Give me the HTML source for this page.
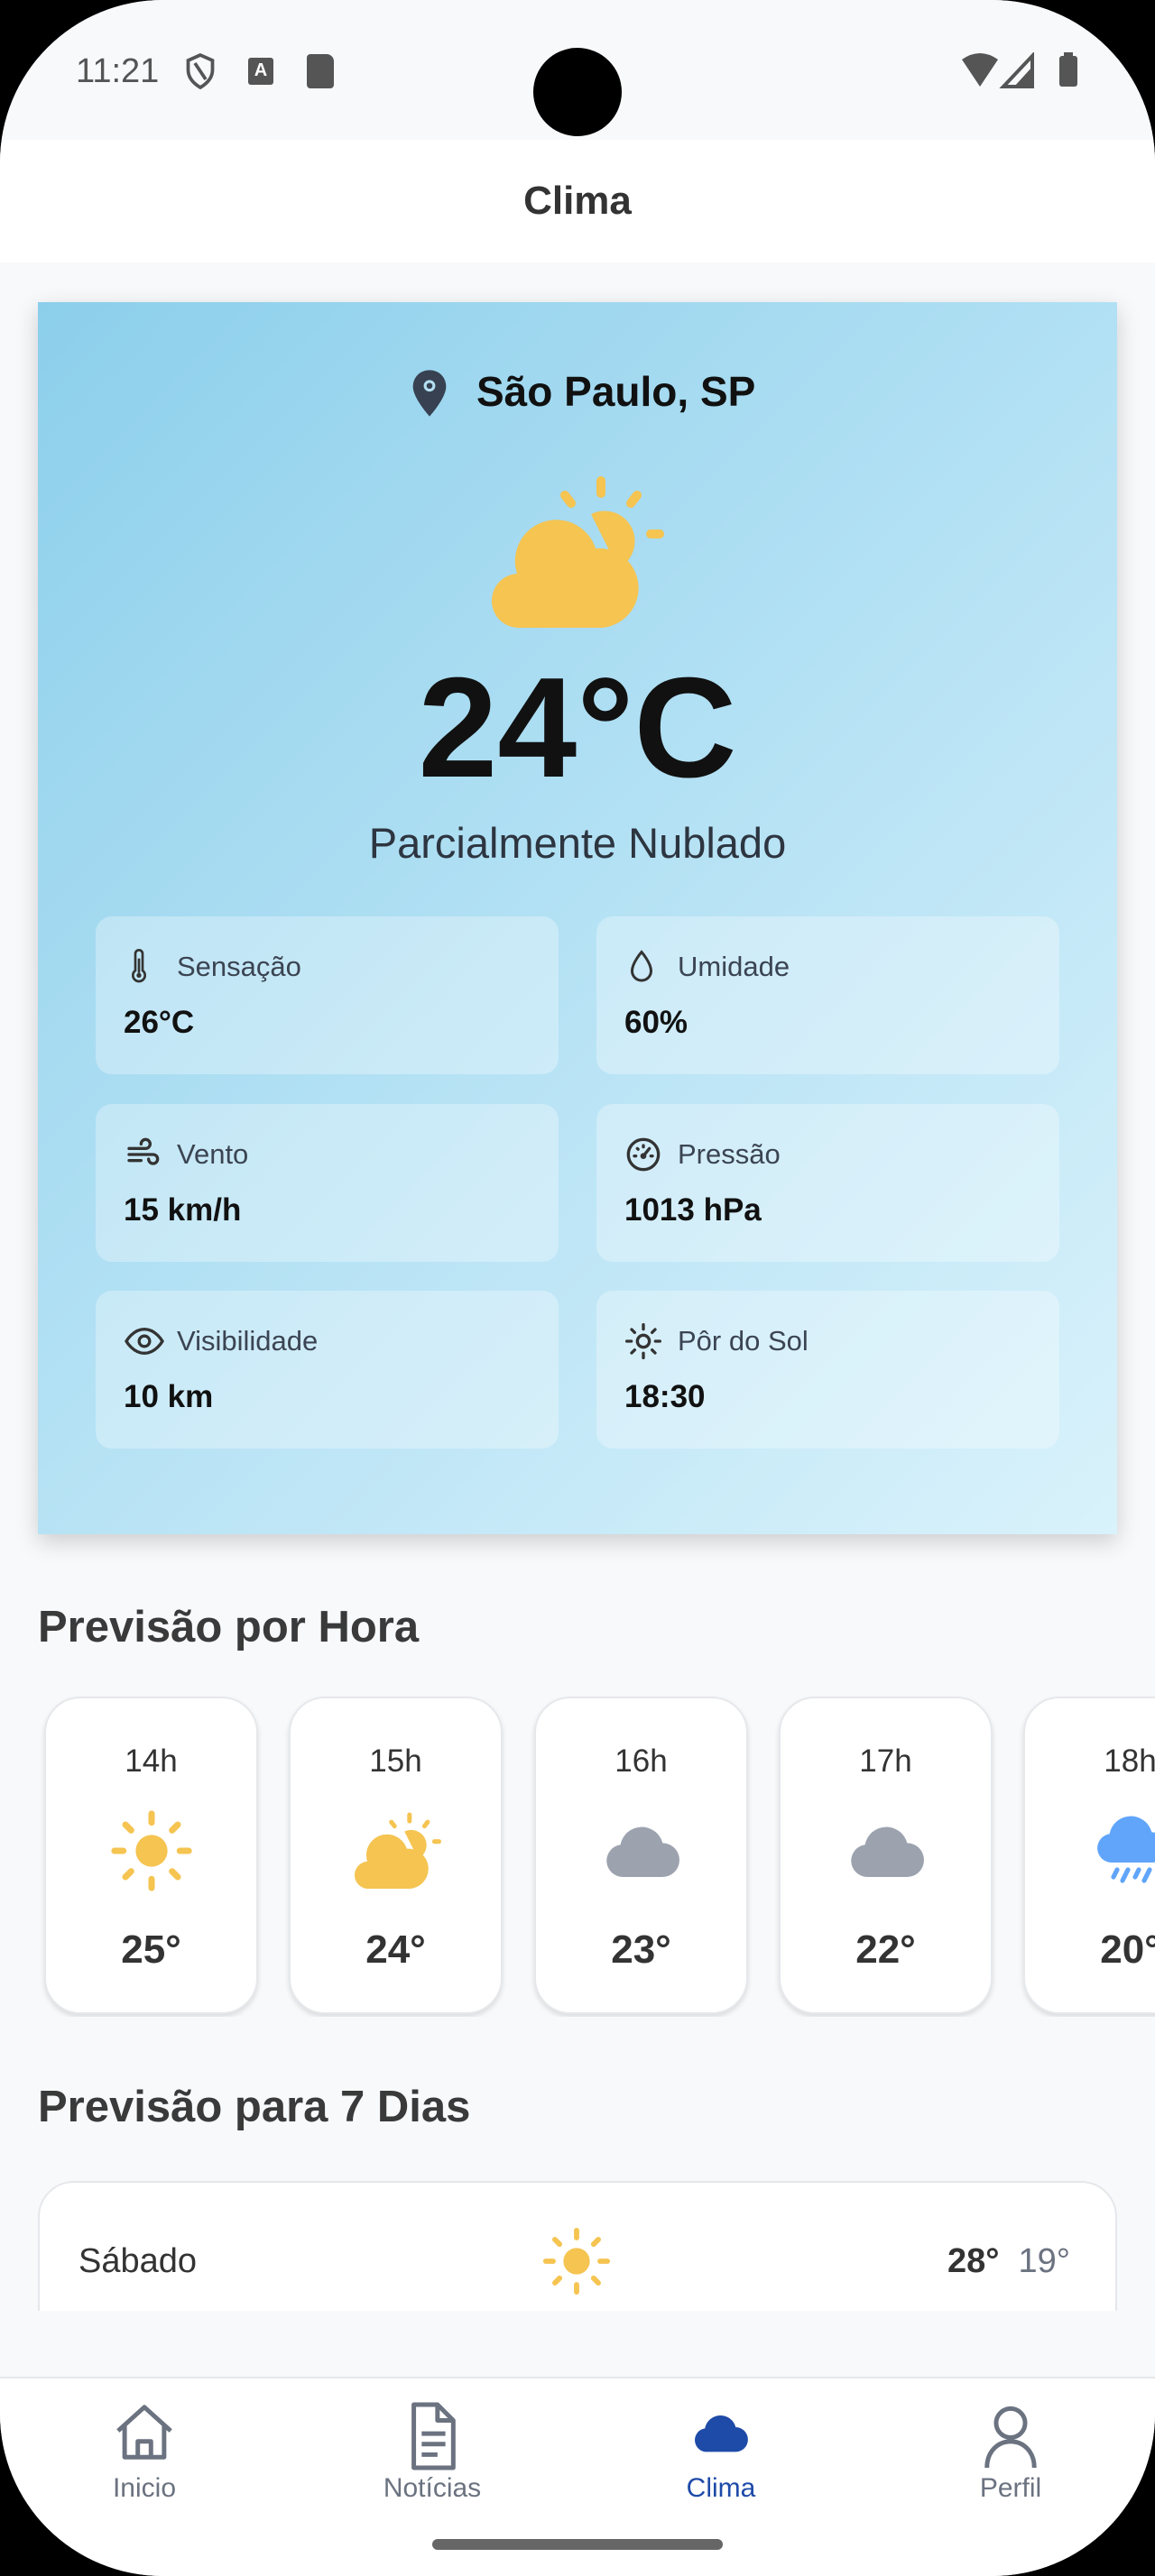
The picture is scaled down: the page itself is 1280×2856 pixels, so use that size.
<!DOCTYPE html>
<html><head><meta charset="utf-8"><style>
*{margin:0;padding:0;box-sizing:border-box}
html,body{width:1280px;height:2856px;background:#000;overflow:hidden}
body{font-family:"Liberation Sans",sans-serif}
#dev{position:absolute;left:0;top:0;width:1280px;height:2856px;background:#f8f9fb;border-radius:180px;overflow:hidden}
.abs{position:absolute}
.status{left:0;top:0;width:1280px;height:155px;background:#f8f9fb}
.appbar{left:0;top:155px;width:1280px;height:136px;background:#fff;text-align:center;font-size:44px;font-weight:bold;color:#333;line-height:136px}
.card{left:42px;top:335px;width:1196px;height:1366px;background:linear-gradient(135deg,#8ccfeb 0%,#b8e3f5 55%,#d9f2fb 100%);box-shadow:0 8px 24px rgba(0,0,0,.18)}
.stat{position:absolute;width:513px;height:175px;background:rgba(255,255,255,.3);border-radius:18px}
.stat .lb{position:absolute;left:90px;top:38px;font-size:31px;color:#3b4452}
.stat .vl{position:absolute;left:31px;top:98px;font-size:35px;font-weight:bold;color:#111}
.stat svg{position:absolute;left:32px;top:36px}
.h2{font-size:49px;font-weight:bold;color:#3a3a3a;left:42px}
.hc{position:absolute;top:1881px;width:237px;height:352px;background:#fff;border-radius:40px;border:2px solid #e6e8ec;box-shadow:0 3px 6px rgba(0,0,0,.12);text-align:center}
.hc .t{position:absolute;left:0;right:0;top:50px;font-size:35px;color:#333}
.hc .tp{position:absolute;left:0;right:0;top:254px;font-size:44px;font-weight:bold;color:#333}
.hc svg{position:absolute;left:70px;top:122px}
.nav{left:0;top:2635px;width:1280px;height:221px;background:#fff;border-top:2px solid #e5e7eb}
.ni{position:absolute;top:0;width:240px;text-align:center;font-size:30px;color:#6b7280}
.ni svg{position:absolute;left:85px;top:26px}
.ni span{position:absolute;left:0;right:0;top:105px}
</style></head><body>
<div id="dev">
<div class="abs status">
 <div class="abs" style="left:84px;top:58px;font-size:38px;color:#555">11:21</div>
 <svg class="abs" style="left:204px;top:58px" width="36" height="42" viewBox="0 0 24 28"><path d="M12 2 3 6v7c0 6 4 10 9 13 5-3 9-7 9-13V6z M8 8l8 12" fill="none" stroke="#555" stroke-width="2.5"/></svg>
 <div class="abs" style="left:275px;top:64px;width:28px;height:30px;background:#555;border-radius:3px;color:#fff;font-size:20px;font-weight:bold;text-align:center;line-height:28px">A</div>
 <div class="abs" style="left:340px;top:60px;width:30px;height:38px;background:#555;border-radius:4px 8px 4px 4px"></div>
 <div class="abs" style="left:591px;top:53px;width:98px;height:98px;background:#000;border-radius:50%"></div>
 <svg class="abs" style="left:1064px;top:58px" width="132" height="40" viewBox="0 0 132 40"><path d="M2 8Q22-6 42 8L22 38z" fill="#555"/><path d="M80 4v34H48z" fill="none" stroke="#555" stroke-width="4"/><path d="M80 16v22H60z" fill="#555"/><rect x="110" y="4" width="20" height="34" rx="3" fill="#555"/><rect x="115" y="0" width="10" height="6" fill="#555"/></svg>
</div>
<div class="abs appbar">Clima</div>

<div class="abs card">
 <svg class="abs" style="left:412px;top:73px" width="44" height="56" viewBox="0 0 24 30"><path d="M12 1C6 1 2 5.5 2 11c0 7 10 18 10 18s10-11 10-18C22 5.5 18 1 12 1z" fill="#374151"/><circle cx="12" cy="10.5" r="3.5" fill="#b3dff2"/><circle cx="12" cy="10.5" r="1.8" fill="#374151"/></svg>
 <div class="abs" style="left:486px;top:72px;font-size:46px;font-weight:bold;color:#111">São Paulo, SP</div>
 <svg class="abs" style="left:501px;top:190px" width="195" height="175" viewBox="0 0 195 175"><g stroke="#f5c451" stroke-width="10" stroke-linecap="round"><line x1="123" y1="8" x2="123" y2="22"/><line x1="83" y1="24" x2="90" y2="33"/><line x1="163" y1="24" x2="156" y2="33"/><line x1="178" y1="67" x2="188" y2="67"/></g><path d="M112 45a30 30 0 0 1 30 60z" fill="#f5c451"/><path d="M34 171a30 30 0 0 1-4-60 45 45 0 0 1 87-28 34 34 0 0 1 7 88z" fill="#f5c451"/></svg>
 <div class="abs" style="left:0;width:1196px;text-align:center;top:372px;font-size:158px;font-weight:bold;color:#111;line-height:200px">24°C</div>
 <div class="abs" style="left:0;width:1196px;text-align:center;top:572px;font-size:47px;color:#2d3540">Parcialmente Nublado</div>

 <div class="stat" style="left:64px;top:681px"><svg width="32" height="40" viewBox="0 0 24 30"><path d="M9 4a3 3 0 0 1 6 0v14a5 5 0 1 1-6 0z" fill="none" stroke="#333" stroke-width="2"/><circle cx="12" cy="22" r="2" fill="#333"/><line x1="12" y1="8" x2="12" y2="20" stroke="#333" stroke-width="2"/></svg><div class="lb">Sensação</div><div class="vl">26°C</div></div>
 <div class="stat" style="left:619px;top:681px"><svg width="36" height="40" viewBox="0 0 24 26"><path d="M12 2C12 2 5 10 5 16a7 7 0 0 0 14 0c0-6-7-14-7-14z" fill="none" stroke="#333" stroke-width="2"/></svg><div class="lb">Umidade</div><div class="vl">60%</div></div>
 <div class="stat" style="left:64px;top:889px"><svg width="40" height="40" viewBox="0 0 24 24"><path d="M3 8h11a3 3 0 1 0-3-3M3 12h16a3 3 0 1 1-3 3M3 16h8" fill="none" stroke="#333" stroke-width="2" stroke-linecap="round"/></svg><div class="lb">Vento</div><div class="vl">15 km/h</div></div>
 <div class="stat" style="left:619px;top:889px"><svg width="40" height="40" viewBox="0 0 24 24"><circle cx="12" cy="12" r="10" fill="none" stroke="#333" stroke-width="2"/><path d="M12 13l4-5M6 13h1M17 13h1M8 8l.5.5M12 6v1" stroke="#333" stroke-width="2" stroke-linecap="round"/><circle cx="12" cy="13" r="2" fill="#333"/></svg><div class="lb">Pressão</div><div class="vl">1013 hPa</div></div>
 <div class="stat" style="left:64px;top:1096px"><svg width="44" height="40" viewBox="0 0 26 24"><path d="M1 12s4.5-8 12-8 12 8 12 8-4.5 8-12 8S1 12 1 12z" fill="none" stroke="#333" stroke-width="2"/><circle cx="13" cy="12" r="3.5" fill="none" stroke="#333" stroke-width="2"/></svg><div class="lb">Visibilidade</div><div class="vl">10 km</div></div>
 <div class="stat" style="left:619px;top:1096px"><svg width="40" height="40" viewBox="0 0 24 24"><circle cx="12" cy="12" r="4" fill="none" stroke="#333" stroke-width="2"/><path d="M12 1v3M12 20v3M1 12h3M20 12h3M4.2 4.2l2 2M17.8 17.8l2 2M4.2 19.8l2-2M17.8 6.2l2-2" stroke="#333" stroke-width="2" stroke-linecap="round"/></svg><div class="lb">Pôr do Sol</div><div class="vl">18:30</div></div>
</div>

<div class="abs h2" style="top:1776px">Previsão por Hora</div>
<div class="abs" style="left:0;top:1860px;width:1280px;height:376px;overflow:hidden">
<div style="position:absolute;top:-1860px;left:0;width:1280px;height:2300px">
<div class="hc" style="left:49px"><div class="t">14h</div><svg width="94" height="94" viewBox="0 0 24 24"><circle cx="12" cy="12" r="4.5" fill="#f5c451"/><g stroke="#f5c451" stroke-width="1.8" stroke-linecap="round"><path d="M12 1.5v2.5M12 20v2.5M1.5 12h2.5M20 12h2.5M4.6 4.6l1.6 1.6M17.8 17.8l1.6 1.6M4.6 19.4l1.6-1.6M17.8 6.2l1.6-1.6"/></g></svg><div class="tp">25°</div></div>
<div class="hc" style="left:320px"><div class="t">15h</div><svg width="98" height="94" viewBox="0 0 195 175"><g stroke="#f5c451" stroke-width="10" stroke-linecap="round"><line x1="123" y1="8" x2="123" y2="22"/><line x1="83" y1="24" x2="90" y2="33"/><line x1="163" y1="24" x2="156" y2="33"/><line x1="178" y1="67" x2="188" y2="67"/></g><path d="M112 45a30 30 0 0 1 30 60z" fill="#f5c451"/><path d="M34 171a30 30 0 0 1-4-60 45 45 0 0 1 87-28 34 34 0 0 1 7 88z" fill="#f5c451"/></svg><div class="tp">24°</div></div>
<div class="hc" style="left:592px"><div class="t">16h</div><svg width="96" height="96" viewBox="0 0 24 24"><path d="M6.5 19a4.5 4.5 0 0 1-.6-8.95A6 6 0 0 1 17.6 9.6 4.7 4.7 0 0 1 17.5 19z" fill="#9ca3af"/></svg><div class="tp">23°</div></div>
<div class="hc" style="left:863px"><div class="t">17h</div><svg width="96" height="96" viewBox="0 0 24 24"><path d="M6.5 19a4.5 4.5 0 0 1-.6-8.95A6 6 0 0 1 17.6 9.6 4.7 4.7 0 0 1 17.5 19z" fill="#9ca3af"/></svg><div class="tp">22°</div></div>
<div class="hc" style="left:1134px"><div class="t">18h</div><svg width="96" height="96" viewBox="0 0 24 24"><path d="M6.5 15a4 4 0 0 1-.6-7.95A6 6 0 0 1 17.6 6.6 4.2 4.2 0 0 1 17.5 15z" fill="#60a5fa"/><path d="M8 17l-1 2M11 17l-1.5 3M14 17l-1 2M17 17l-1.5 3" stroke="#60a5fa" stroke-width="1.3" stroke-linecap="round"/></svg><div class="tp">20°</div></div>
</div></div>

<div class="abs h2" style="top:2308px">Previsão para 7 Dias</div>
<div class="abs" style="left:42px;top:2418px;width:1196px;height:144px;overflow:hidden">
 <div style="position:absolute;left:0;top:0;width:1196px;height:220px;background:#fff;border:2px solid #e5e7eb;border-radius:40px"></div>
 <div class="abs" style="left:45px;top:68px;font-size:38px;color:#333">Sábado</div>
 <svg class="abs" style="left:558px;top:50px" width="78" height="78" viewBox="0 0 24 24"><circle cx="12" cy="12" r="4.5" fill="#f5c451"/><g stroke="#f5c451" stroke-width="1.8" stroke-linecap="round"><path d="M12 1.5v2.5M12 20v2.5M1.5 12h2.5M20 12h2.5M4.6 4.6l1.6 1.6M17.8 17.8l1.6 1.6M4.6 19.4l1.6-1.6M17.8 6.2l1.6-1.6"/></g></svg>
 <div class="abs" style="right:52px;top:68px;font-size:38px;color:#333"><b>28°</b>&nbsp; <span style="color:#6b7280">19°</span></div>
</div>

<div class="abs nav">
 <div class="ni" style="left:40px"><svg width="70" height="70" viewBox="0 0 24 24"><path d="M2 11 12 2l10 9M4.5 9v12h15V9M9.5 21v-6h5v6" fill="none" stroke="#6b7280" stroke-width="1.7" stroke-linejoin="round"/></svg><span>Inicio</span></div>
 <div class="ni" style="left:359px"><svg width="70" height="76" viewBox="0 0 24 26"><path d="M5 1h9l6 6v18H5z M14 1v6h6M8 12h9M8 16h9M8 20h6" fill="none" stroke="#6b7280" stroke-width="1.7" stroke-linejoin="round"/></svg><span>Notícias</span></div>
 <div class="ni" style="left:679px;color:#1e4aa8"><svg width="70" height="70" viewBox="0 0 24 24"><path d="M6.5 19a4.5 4.5 0 0 1-.6-8.95A6 6 0 0 1 17.6 9.6 4.7 4.7 0 0 1 17.5 19z" fill="#1e4aa8"/></svg><span>Clima</span></div>
 <div class="ni" style="left:1000px"><svg width="70" height="76" viewBox="0 0 24 26"><circle cx="12" cy="8" r="5.5" fill="none" stroke="#6b7280" stroke-width="1.7"/><path d="M3 25c0-6 4-10 9-10s9 4 9 10" fill="none" stroke="#6b7280" stroke-width="1.7"/></svg><span>Perfil</span></div>
 <div class="abs" style="left:479px;top:178px;width:322px;height:12px;background:#666;border-radius:6px"></div>
</div>
</div>
</body></html>
